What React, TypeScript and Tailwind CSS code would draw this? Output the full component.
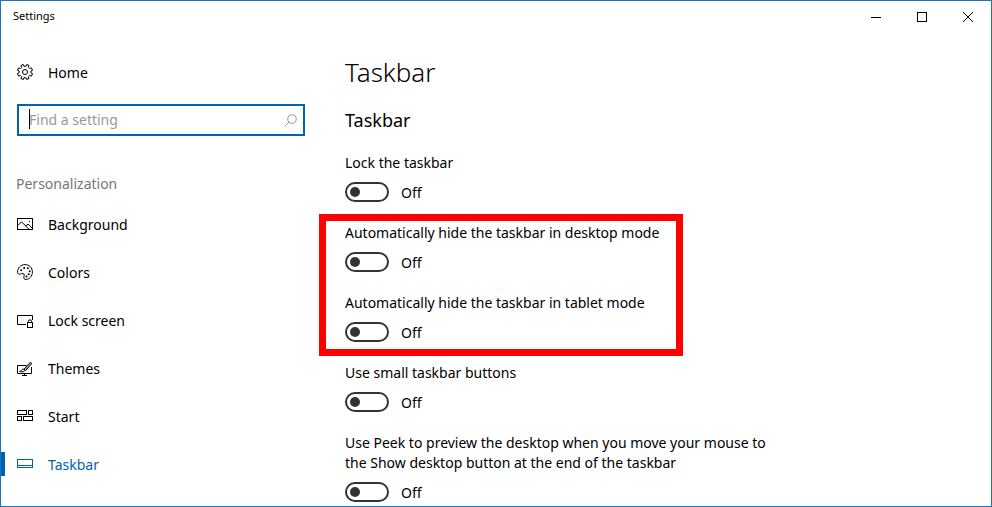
import { useState } from 'react';
import type { ReactNode } from 'react';
import clsx from 'clsx';

interface IconProps {
  children: ReactNode;
}

// Shared 16px frame for the navigation glyphs
function Icon({ children }: IconProps) {
  return (
    <svg
      className="size-4 shrink-0"
      viewBox="0 0 16 16"
      fill="none"
      stroke="currentColor"
      strokeWidth={1}
      aria-hidden="true"
    >
      {children}
    </svg>
  );
}

const GearIcon = () => (
  <Icon>
    <path
      d="M6.6 .6l.5 1.500h1.800l.5-1.500 2.100.8-.6 1.600 1.100 1.100 1.600-.6.9 2.100-1.400.6v1.600l1.400.6-.9 2.200-1.600-.6-1.100 1.100.6 1.600-2.100.8-.5-1.500H7.100l-.5 1.500-2.100-.8.6-1.600L4 10l-1.600.6-.9-2.200 1.400-.6V6.200l-1.400-.6.9-2.100 1.600.6L5.100 3l-.6-1.600z"
      transform="translate(8 8) scale(1.16) translate(-8 -7.050)"
      strokeLinejoin="round"
      vectorEffect="non-scaling-stroke"
    />
    <circle cx="8" cy="8" r="2.500" />
  </Icon>
);

const PictureIcon = () => (
  <Icon>
    <rect x=".5" y="2.500" width="15" height="11" />
    <path d="M1 9.500l3.500-3.700 7.500 7.500M9 10l2-2 4.500 4.500" />
    <path d="M12 5.500h1" />
  </Icon>
);

const PaletteIcon = () => (
  <Icon>
    <path d="M.6 8.500C.3 4 3.500 .6 8 .6c4.300 0 7.400 3.200 7.400 7.300 0 4.300-3.200 7.500-6.300 7.500-2 0-2.600-1-2.200-2.500.5-1.600.6-2.900-.8-3.400-1.300-.4-2.200.7-3.400.7C1.600 10.200.7 9.600.6 8.500z" />
    <g fill="currentColor" stroke="none">
      <circle cx="4.200" cy="6.200" r="1" />
      <circle cx="7.200" cy="4" r="1" />
      <circle cx="10.800" cy="4.200" r="1" />
      <circle cx="12.700" cy="7.200" r="1" />
      <circle cx="11.800" cy="10.300" r="1" />
      <circle cx="9.500" cy="12.600" r="1" />
    </g>
  </Icon>
);

const LockScreenIcon = () => (
  <Icon>
    <path d="M9 12.500H.5v-9h15V8" />
    <rect x="10.500" y="10.500" width="5" height="5" />
    <path d="M11.500 10.500V9.300a1.500 1.500 0 0 1 3 0v1.200" />
  </Icon>
);

const ThemesIcon = () => (
  <Icon>
    <path d="M9.500 5.500H.5v8h14V7M7.500 13.500v2M5 15.500h5" />
    <path
      d="M7 9.200L12.800 2.800c1-.9 2.300.2 1.500 1.300L8.600 10.600z"
      fill="currentColor"
      fillOpacity=".35"
    />
    <path d="M2.500 11.500c1.800 0 1.900-2.400 3.700-2.400 1.600 0 2.200 1.500 1 2.300-1.200.6-3 .4-4.700.1z" />
  </Icon>
);

const StartIcon = () => (
  <Icon>
    <rect x=".5" y="2.500" width="9" height="4" />
    <rect x="11.500" y="2.500" width="4" height="4" />
    <rect x=".5" y="8.500" width="4" height="4" />
    <rect x="6.500" y="8.500" width="9" height="4" />
  </Icon>
);

const TaskbarIcon = () => (
  <Icon>
    <rect x=".5" y="3.500" width="15" height="8" />
    <path d="M1 9.500h14" />
  </Icon>
);

const NAV_ITEMS = [
  { label: 'Background', icon: <PictureIcon /> },
  { label: 'Colors', icon: <PaletteIcon /> },
  { label: 'Lock screen', icon: <LockScreenIcon /> },
  { label: 'Themes', icon: <ThemesIcon /> },
  { label: 'Start', icon: <StartIcon /> },
  { label: 'Taskbar', icon: <TaskbarIcon /> },
];

interface ToggleSettingProps {
  id: string;
  label: string;
}

function ToggleSetting({ id, label }: ToggleSettingProps) {
  const [on, setOn] = useState(false);

  return (
    <div>
      <label htmlFor={id} className="block max-w-[440px]">
        {label}
      </label>
      <div className="mt-2 flex h-[22px] items-center gap-3">
        <input
          id={id}
          type="checkbox"
          role="switch"
          checked={on}
          onChange={(e) => setOn(e.target.checked)}
          className="flex h-5 w-11 appearance-none items-center rounded-full border-2 border-[#333333] px-[3px] before:size-[10px] before:rounded-full before:bg-[#333333] checked:justify-end checked:border-[#0063b1] checked:bg-[#0063b1] checked:before:bg-white"
        />
        <span className="pt-0.5">{on ? 'On' : 'Off'}</span>
      </div>
    </div>
  );
}

function TitleBar() {
  return (
    <header className="flex h-[31px] items-center justify-between">
      <span className="pb-0.5 pl-3 text-[11px]">Settings</span>
      <div className="flex h-full">
        <button type="button" aria-label="Minimize" className="grid w-[46px] place-items-center">
          <svg className="size-[10px]" viewBox="0 0 10 10" stroke="currentColor" aria-hidden="true">
            <path d="M0 5.500h10" />
          </svg>
        </button>
        <button type="button" aria-label="Maximize" className="grid w-[46px] place-items-center">
          <svg className="size-[10px]" viewBox="0 0 10 10" fill="none" stroke="currentColor" aria-hidden="true">
            <rect x=".5" y=".5" width="9" height="9" />
          </svg>
        </button>
        <button type="button" aria-label="Close" className="grid w-[46px] place-items-center">
          <svg className="size-[10px]" viewBox="0 0 10 10" stroke="currentColor" aria-hidden="true">
            <path d="M0 0l10 10M10 0L0 10" />
          </svg>
        </button>
      </div>
    </header>
  );
}

function SearchBox() {
  const [query, setQuery] = useState('');

  return (
    <div className="relative mx-4 mt-2 flex h-8 items-center border-2 border-[#0063b1] pr-[6px] pl-[10px]">
      <input
        type="text"
        value={query}
        onChange={(e) => setQuery(e.target.value)}
        placeholder="Find a setting"
        aria-label="Find a setting"
        className="min-w-0 flex-1 outline-none placeholder:text-[#999999]"
      />
      {query === '' && <span className="absolute top-[3px] left-[10px] h-5 w-px bg-black" />}
      <svg
        className="size-[13px] shrink-0"
        viewBox="0 0 13 13"
        fill="none"
        stroke="#999999"
        aria-hidden="true"
      >
        <circle cx="8" cy="5" r="4.300" />
        <path d="M5 8L.5 12.500" />
      </svg>
    </div>
  );
}

function Sidebar() {
  return (
    <aside className="w-80 shrink-0 pt-4">
      <a href="#home" className="flex h-12 items-center gap-[15px] px-4">
        <GearIcon />
        <span className="pt-0.5">Home</span>
      </a>
      <SearchBox />
      <h2 className="mt-9 h-6 px-[15px] leading-6 text-[#767676]">Personalization</h2>
      <nav className="mt-1">
        {NAV_ITEMS.map(({ label, icon }) => {
          const active = label === 'Taskbar';
          return (
            <a
              key={label}
              href={`#${label.toLowerCase().replace(' ', '-')}`}
              aria-current={active ? 'page' : undefined}
              className={clsx(
                'relative flex h-12 items-center gap-[15px] px-4',
                active &&
                  'text-[#0063b1] before:absolute before:left-0 before:h-6 before:w-1 before:bg-[#0063b1]'
              )}
            >
              {icon}
              <span className="pt-0.5">{label}</span>
            </a>
          );
        })}
      </nav>
    </aside>
  );
}

export default function App() {
  return (
    <div className="min-h-screen border border-[#1f72b6] bg-white font-['Noto_Sans',sans-serif] text-[14px] leading-5 text-black">
      <TitleBar />
      <div className="flex">
        <Sidebar />
        <main className="min-w-0 flex-1 pt-5 pl-6">
          <h1 className="text-[26px] leading-10 font-light">Taskbar</h1>
          <h2 className="mt-4 text-[18px] leading-6">Taskbar</h2>
          <div className="mt-[21px] flex flex-col gap-5">
            <ToggleSetting id="lock" label="Lock the taskbar" />
            <div className="relative flex flex-col gap-5">
              <ToggleSetting id="hide-desktop" label="Automatically hide the taskbar in desktop mode" />
              <ToggleSetting id="hide-tablet" label="Automatically hide the taskbar in tablet mode" />
              {/* Highlight frame around the auto-hide options */}
              <div className="pointer-events-none absolute -top-[9px] -bottom-[13px] -left-[26px] w-[364px] border-7 border-[#ff0000]" />
            </div>
            <ToggleSetting id="small-buttons" label="Use small taskbar buttons" />
            <ToggleSetting
              id="peek"
              label="Use Peek to preview the desktop when you move your mouse to the Show desktop button at the end of the taskbar"
            />
          </div>
        </main>
      </div>
    </div>
  );
}
